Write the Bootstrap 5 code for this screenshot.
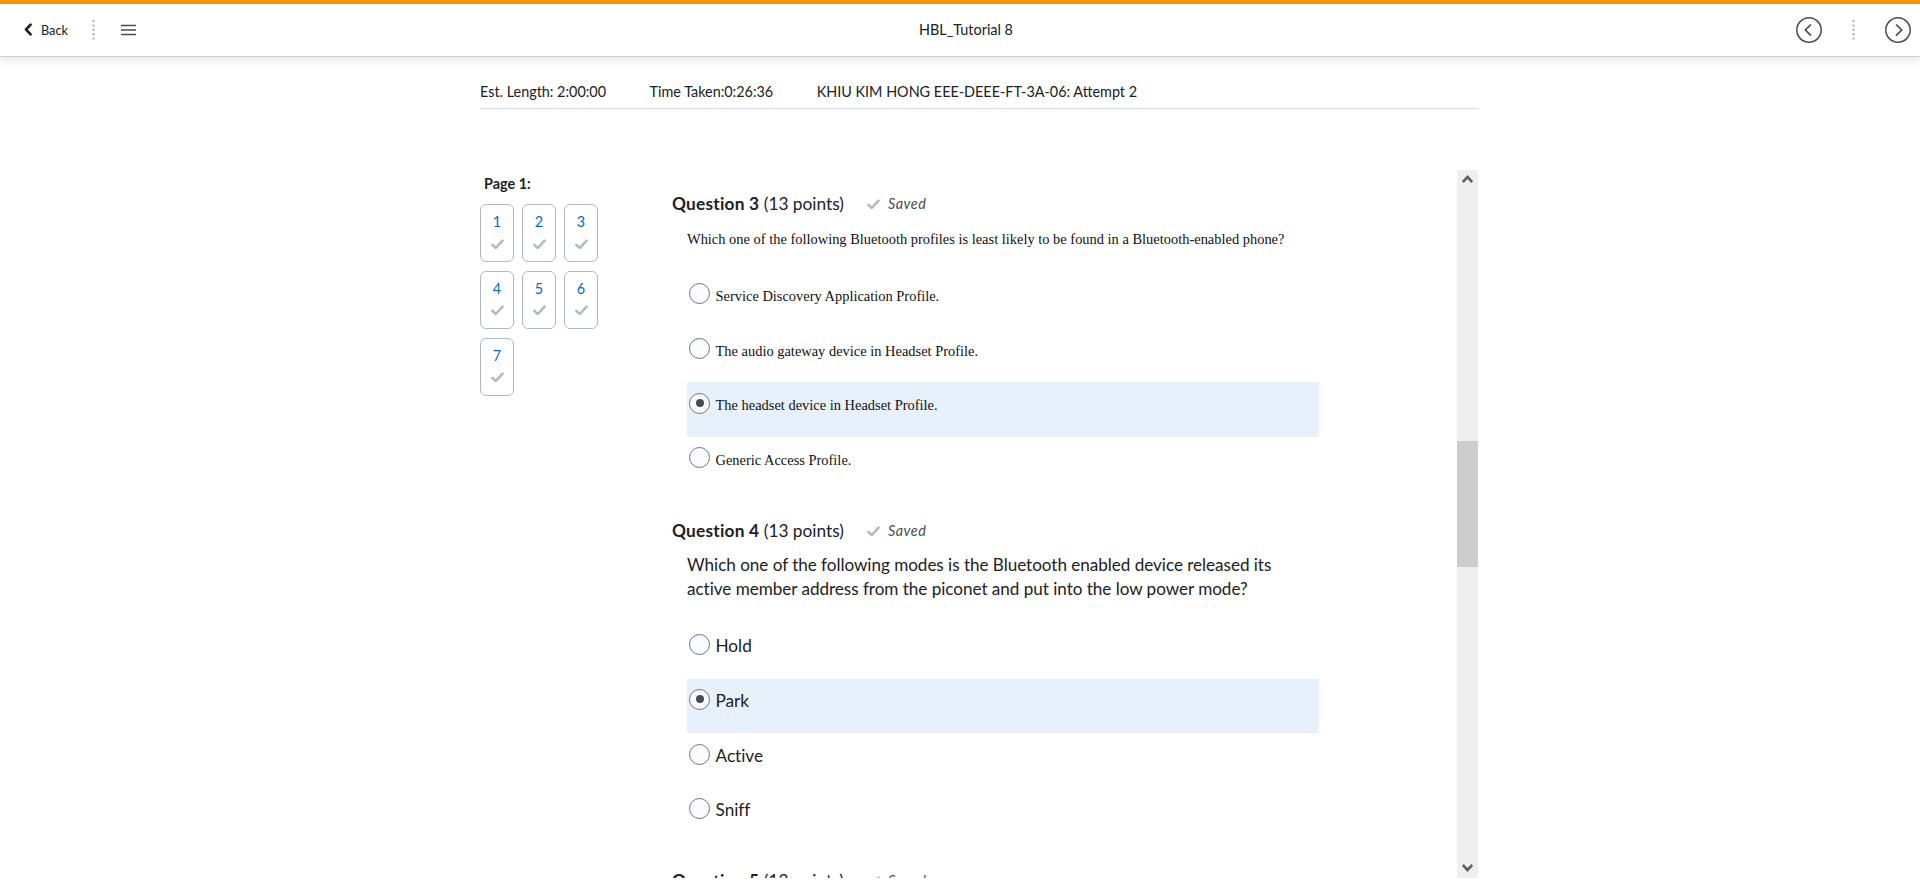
<!DOCTYPE html>
<html lang="en">
<head>
<meta charset="utf-8">
<meta name="viewport" content="width=device-width, initial-scale=1">
<title>HBL_Tutorial 8</title>
<link href="https://cdn.jsdelivr.net/npm/bootstrap@5.3.0/dist/css/bootstrap.min.css" rel="stylesheet">
<style>
body{font-family:Lato,"Liberation Sans",sans-serif;color:#202122;background:#fff;height:888px;overflow:hidden;font-size:14.4px;line-height:20px}
svg{display:block;flex:none}
.topbar{height:57px;border-top:4px solid #f79400;border-bottom:1px solid #cfcfcf;box-shadow:0 2px 10px rgba(0,0,0,.13)}
.topbar-side{width:240px}
.back-link{font-size:12.7px;color:#202122;gap:9px;margin-left:24px;padding-bottom:1px}
.menu-icon{margin-left:26px}
.quiz-title{font-size:14.4px;margin-left:12px;padding-bottom:1px;font-variant-ligatures:none}
.nav-arrows{gap:30px;padding-right:9px}
.quiz-shell{width:998px;margin-left:480px;height:821px}
.info-row{height:52px;padding-top:25px;gap:43.5px;border-bottom:1px solid #d5dbe0;line-height:20px}
.info-row span{white-space:nowrap}
.quiz-body{margin-top:61px;height:708px}
.page-nav{width:192px;flex:none}
.page-label{font-weight:700;padding:4px 0 0 4px;height:34px}
.num-grid{display:grid;grid-template-columns:repeat(3,34px);column-gap:8px;row-gap:8.8px}
.num-tile{height:58px;border:1px solid #b1b9be;border-radius:6px;color:#006fbf;padding-top:7px;gap:6.5px;font-size:14.4px}
.questions{width:785px;flex:none;overflow:hidden}
.q-head{height:26px;line-height:26px;font-size:17.3px;font-variant-ligatures:none}
.q-head b{letter-spacing:.22px}
.q-saved{font-size:14.4px;margin-left:23px;color:#494c4e;gap:8px;letter-spacing:.5px}
.q-text{margin-left:15px}
.q-option{margin-left:15px;width:632px;height:54.6px;padding:10.4px 0 0 2px;gap:5.5px}
.q-option.picked{background:#e7f1fc}
.q-option .q-label{line-height:24px;font-size:17.2px;letter-spacing:-.01px}
.serif-q .q-label,.serif-q .q-text{font-family:"Liberation Serif",serif;font-size:14.44px;letter-spacing:normal;color:#111}
.serif-q .q-label{padding-top:.6px}
.plain-q .q-text{font-size:17.1px;line-height:24px;letter-spacing:-.03px}
.radio-dot{width:21px;height:21px;border:1px solid #6e7376;border-radius:50%;background:#f9fbff;flex:none}
.picked .radio-dot::after{content:"";width:8px;height:8px;border-radius:50%;background:#494c4e}
.scroll-track{width:21px;background:#efefef}
.scroll-thumb{height:126px;background:#cdcdcd}
</style>
</head>
<body>
<svg class="d-none" xmlns="http://www.w3.org/2000/svg">
<symbol id="check" viewBox="0 0 13 11"><path d="M1.3 5.8 4.8 9 11.6 1.6" fill="none" stroke="#b1b9be" stroke-width="2.5" stroke-linecap="round" stroke-linejoin="round"/></symbol>
<symbol id="dots" viewBox="0 0 3 22"><g fill="#b1b9be"><circle cx="1.5" cy="2" r="1.2"/><circle cx="1.5" cy="6.4" r="1.2"/><circle cx="1.5" cy="10.8" r="1.2"/><circle cx="1.5" cy="15.2" r="1.2"/><circle cx="1.5" cy="19.6" r="1.2"/></g></symbol>
</svg>
<header class="topbar d-flex align-items-center justify-content-between">
  <div class="topbar-side d-flex align-items-center">
    <a class="back-link d-flex align-items-center text-decoration-none" href="#">
      <svg width="8" height="13" viewBox="0 0 8 13"><path d="M6.6 1.6 2 6.5l4.6 4.9" fill="none" stroke="#202122" stroke-width="2.6" stroke-linecap="round" stroke-linejoin="round"/></svg>
      <span>Back</span>
    </a>
    <svg class="ms-4" width="3" height="22"><use href="#dots"/></svg>
    <svg class="menu-icon" width="15" height="12" viewBox="0 0 15 12"><path d="M0 1.5h15M0 6h15M0 10.5h15" stroke="#494c4e" stroke-width="1.4"/></svg>
  </div>
  <div class="quiz-title">HBL_Tutorial 8</div>
  <div class="topbar-side nav-arrows d-flex align-items-center justify-content-end">
    <svg width="26" height="26" viewBox="0 0 26 26" fill="none" stroke="#494c4e"><circle cx="13" cy="13" r="12.2" stroke-width="1.5"/><path d="M15 7.5 9.3 13l5.7 5.6" stroke-width="1.7"/></svg>
    <svg width="3" height="22"><use href="#dots"/></svg>
    <svg width="26" height="26" viewBox="0 0 26 26" fill="none" stroke="#494c4e"><circle cx="13" cy="13" r="12.2" stroke-width="1.5"/><path d="m11 7.5 5.7 5.5-5.7 5.6" stroke-width="1.7"/></svg>
  </div>
</header>
<main class="quiz-shell">
  <div class="info-row d-flex"><span>Est. Length: 2:00:00</span><span>Time Taken:0:26:36</span><span>KHIU KIM HONG EEE-DEEE-FT-3A-06: Attempt 2</span></div>
  <div class="quiz-body d-flex">
    <nav class="page-nav">
      <div class="page-label">Page 1:</div>
      <div class="num-grid">
        <div class="num-tile d-flex flex-column align-items-center">1<svg width="13" height="11"><use href="#check"/></svg></div>
        <div class="num-tile d-flex flex-column align-items-center">2<svg width="13" height="11"><use href="#check"/></svg></div>
        <div class="num-tile d-flex flex-column align-items-center">3<svg width="13" height="11"><use href="#check"/></svg></div>
        <div class="num-tile d-flex flex-column align-items-center">4<svg width="13" height="11"><use href="#check"/></svg></div>
        <div class="num-tile d-flex flex-column align-items-center">5<svg width="13" height="11"><use href="#check"/></svg></div>
        <div class="num-tile d-flex flex-column align-items-center">6<svg width="13" height="11"><use href="#check"/></svg></div>
        <div class="num-tile d-flex flex-column align-items-center">7<svg width="13" height="11"><use href="#check"/></svg></div>
      </div>
    </nav>
    <div class="questions">
      <section class="serif-q" style="padding-top:21px;height:348px">
        <div class="q-head d-flex"><div><b>Question 3</b> (13 points)</div><div class="q-saved d-flex align-items-center fst-italic"><svg width="13" height="11"><use href="#check"/></svg>Saved</div></div>
        <div class="q-text" style="padding-top:12px;height:56px">Which one of the following Bluetooth profiles is least likely to be found in a Bluetooth-enabled phone?</div>
        <div class="q-option d-flex"><span class="radio-dot d-flex align-items-center justify-content-center"></span><span class="q-label">Service Discovery Application Profile.</span></div>
        <div class="q-option d-flex"><span class="radio-dot d-flex align-items-center justify-content-center"></span><span class="q-label">The audio gateway device in Headset Profile.</span></div>
        <div class="q-option picked d-flex"><span class="radio-dot d-flex align-items-center justify-content-center"></span><span class="q-label">The headset device in Headset Profile.</span></div>
        <div class="q-option d-flex"><span class="radio-dot d-flex align-items-center justify-content-center"></span><span class="q-label">Generic Access Profile.</span></div>
      </section>
      <section class="plain-q" style="height:350px">
        <div class="q-head d-flex"><div><b>Question 4</b> (13 points)</div><div class="q-saved d-flex align-items-center fst-italic"><svg width="13" height="11"><use href="#check"/></svg>Saved</div></div>
        <div class="q-text" style="padding-top:9px;height:80px">Which one of the following modes is the Bluetooth enabled device released its<br>active member address from the piconet and put into the low power mode?</div>
        <div class="q-option d-flex"><span class="radio-dot d-flex align-items-center justify-content-center"></span><span class="q-label">Hold</span></div>
        <div class="q-option picked d-flex"><span class="radio-dot d-flex align-items-center justify-content-center"></span><span class="q-label">Park</span></div>
        <div class="q-option d-flex"><span class="radio-dot d-flex align-items-center justify-content-center"></span><span class="q-label">Active</span></div>
        <div class="q-option d-flex"><span class="radio-dot d-flex align-items-center justify-content-center"></span><span class="q-label">Sniff</span></div>
      </section>
      <section>
        <div class="q-head d-flex"><div><b>Question 5</b> (13 points)</div><div class="q-saved d-flex align-items-center fst-italic"><svg width="13" height="11"><use href="#check"/></svg>Saved</div></div>
      </section>
    </div>
    <div class="scroll-track d-flex flex-column justify-content-between align-items-center">
      <svg width="11" height="18" viewBox="0 0 11 18"><path d="M.8 12 5.5 7l4.7 5" fill="none" stroke="#606060" stroke-width="2.6"/></svg>
      <div class="scroll-thumb w-100" style="margin-bottom:40px"></div>
      <svg width="11" height="19" viewBox="0 0 11 19"><path d="m.8 6 4.7 5 4.7-5" fill="none" stroke="#606060" stroke-width="2.6"/></svg>
    </div>
  </div>
</main>
<script src="https://cdn.jsdelivr.net/npm/bootstrap@5.3.0/dist/js/bootstrap.bundle.min.js"></script>
</body>
</html>
